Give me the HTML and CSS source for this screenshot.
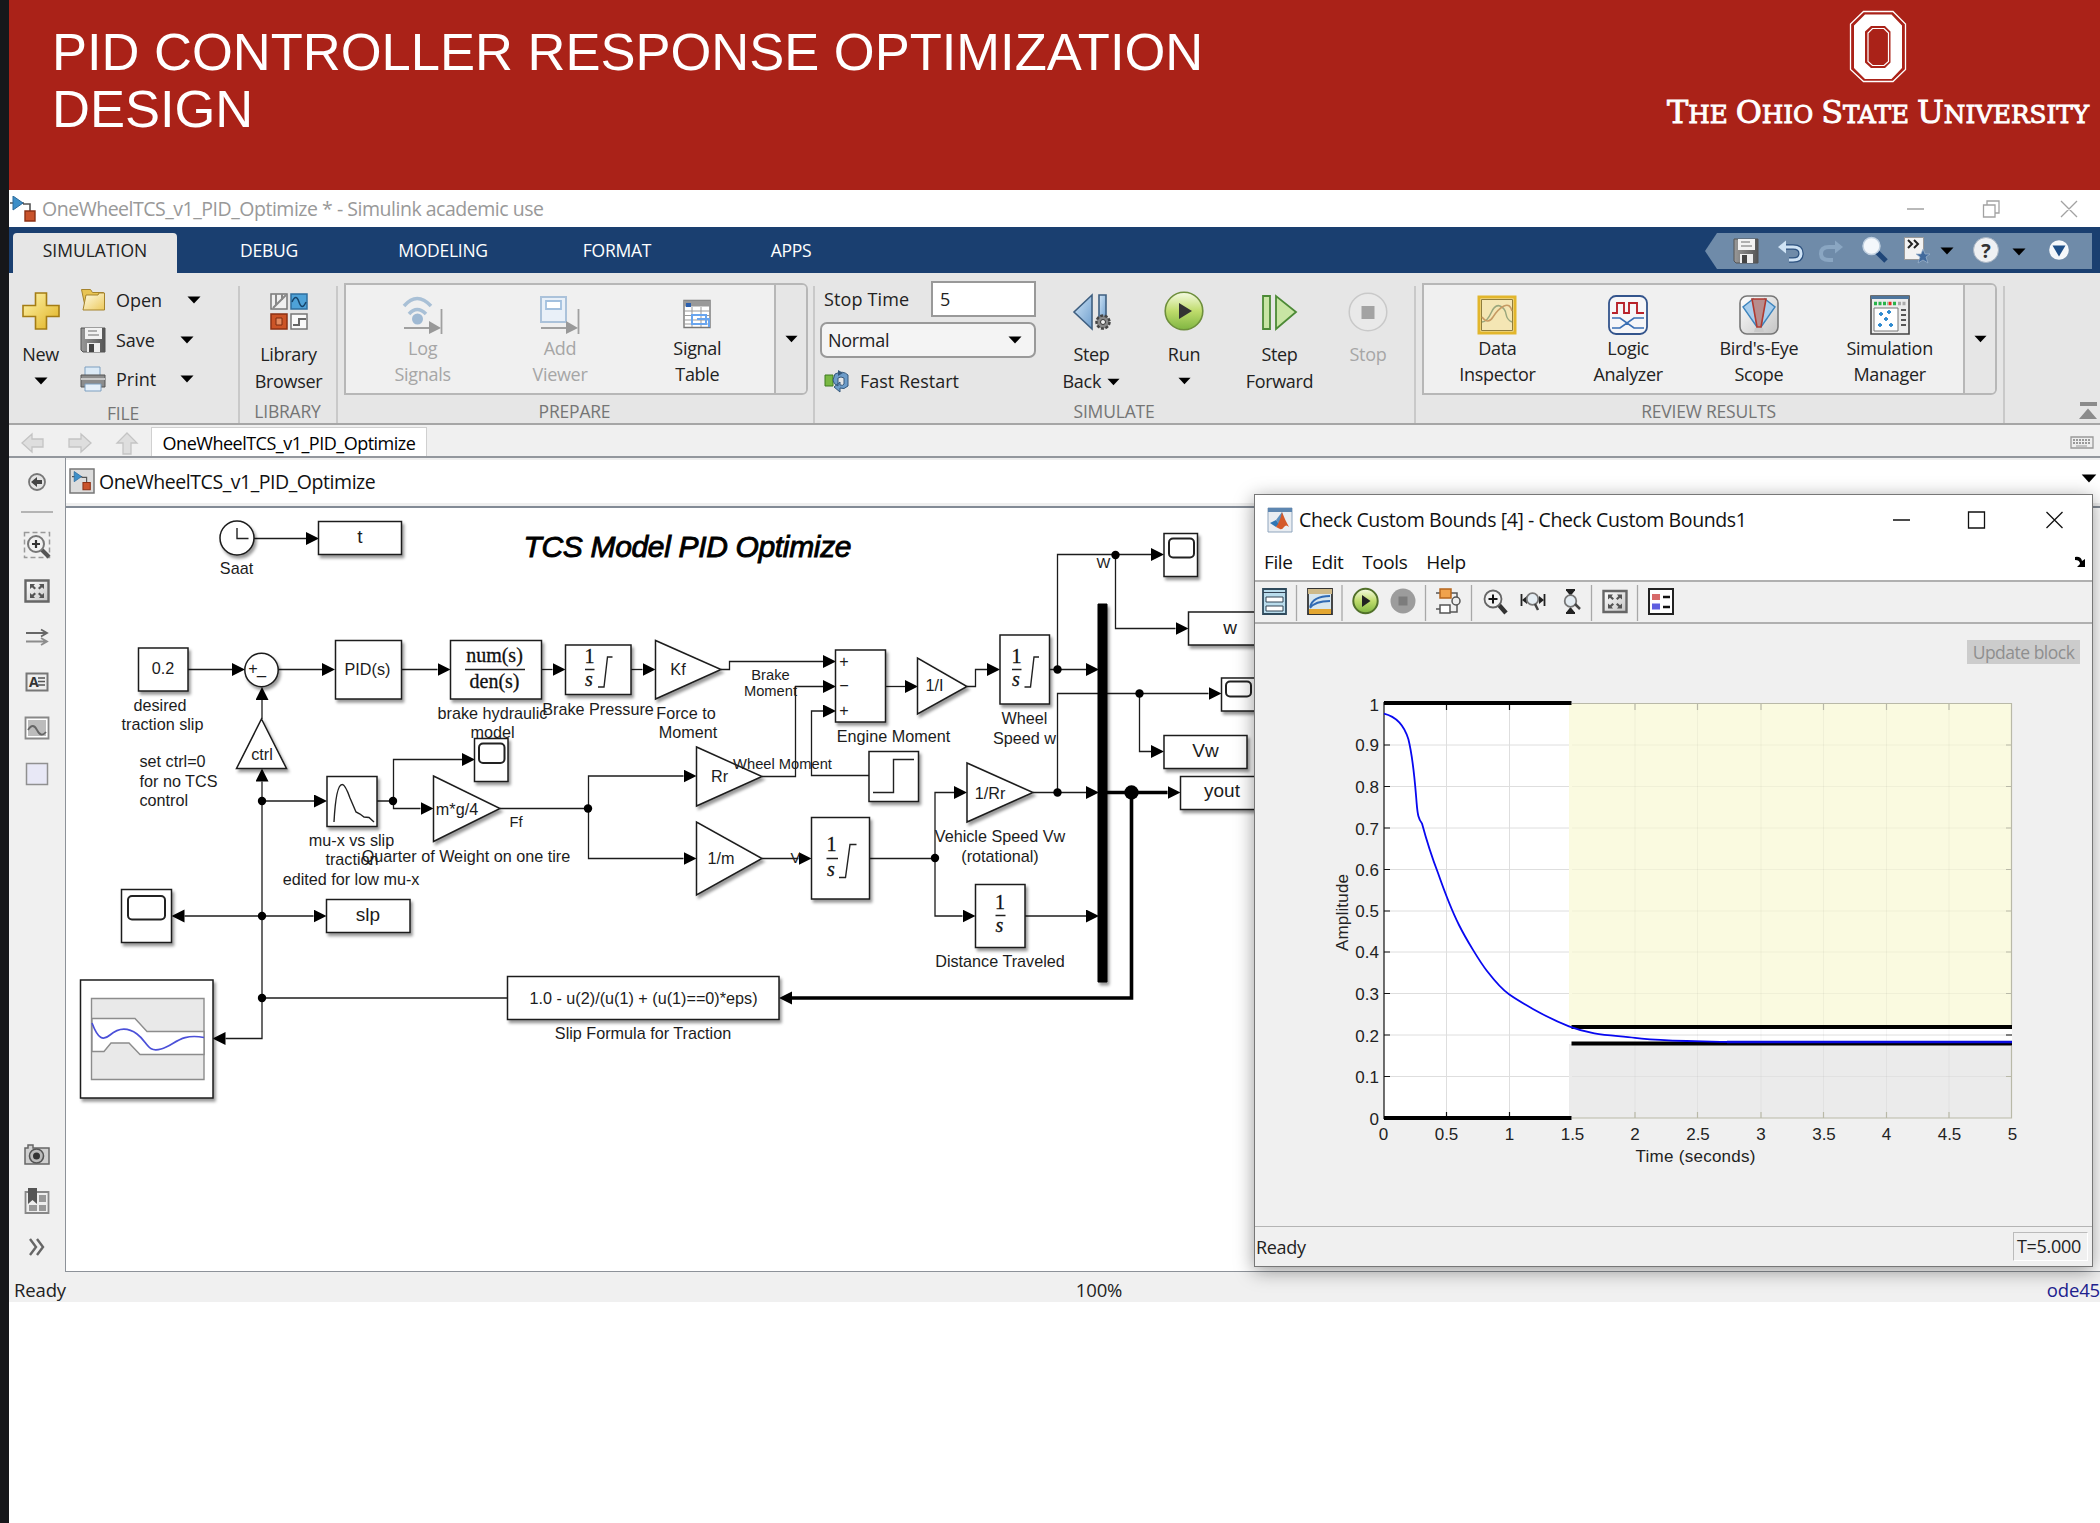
FILE: index.html
```html
<!DOCTYPE html>
<html lang="en">
<head>
<meta charset="utf-8">
<title>PID Controller Response Optimization Design</title>
<link rel="stylesheet" href="styles.css">
</head>
<body>
<svg class="defs" width="0" height="0">
  <defs>
    <linearGradient id="gold" x1="0" y1="0" x2="1" y2="1"><stop offset="0" stop-color="#fff6b0"/><stop offset="1" stop-color="#e0b01c"/></linearGradient>
    <linearGradient id="folder" x1="0" y1="0" x2="1" y2="1"><stop offset="0" stop-color="#fffce6"/><stop offset="1" stop-color="#ecc95c"/></linearGradient>
    <linearGradient id="green" x1="0" y1="0" x2="0" y2="1"><stop offset="0" stop-color="#f6fbe4"/><stop offset=".5" stop-color="#bfdc6c"/><stop offset="1" stop-color="#7fb541"/></linearGradient>
    <linearGradient id="blue" x1="0" y1="0" x2="1" y2="1"><stop offset="0" stop-color="#cfe4f6"/><stop offset="1" stop-color="#6f9fce"/></linearGradient>
    <linearGradient id="grey" x1="0" y1="0" x2="1" y2="1"><stop offset="0" stop-color="#ffffff"/><stop offset="1" stop-color="#c4c4c4"/></linearGradient>
    <linearGradient id="steel" x1="0" y1="0" x2="1" y2="0"><stop offset="0" stop-color="#999"/><stop offset="1" stop-color="#555"/></linearGradient>
    <filter id="drop" x="-20%" y="-20%" width="150%" height="150%"><feDropShadow dx="2" dy="3" stdDeviation="1.6" flood-color="#000" flood-opacity=".4"/></filter>
    <marker id="head" markerUnits="userSpaceOnUse" markerWidth="13" markerHeight="14" refX="0" refY="6.5" orient="auto"><path d="M0 0 13 6.5 0 13z"/></marker>
    <symbol id="floppy" viewBox="0 0 26 26"><path d="M1 1h24v24H3l-2-2z" fill="url(#steel)" stroke="#555"/><path d="M5 1h17v11H5z" fill="#f2f2f2"/><path d="M8 4h9M8 8h11" stroke="#999" stroke-width="1.6"/><path d="M7 16h13v9H7z" fill="#eee"/><path d="M9 17h5v8H9z" fill="#444"/></symbol>
    <symbol id="model" viewBox="0 0 26 26"><path d="M0 7h14M13 8h7v8" stroke="#555" stroke-width="1.6" fill="none"/><path d="M3 0v14l10-7z" fill="#3e8fc8" stroke="#2b6a9c"/><path d="M15 15h10v10H15z" fill="#c9532b" stroke="#8c3114" stroke-width="1.4"/></symbol>
    <symbol id="caret" viewBox="0 0 14 8"><path d="M.5.5h13L7 7.5z"/></symbol>
    <symbol id="fit" viewBox="0 0 26 24"><path d="M1.5 1.5h23v21h-23z" fill="url(#grey)" stroke="#666" stroke-width="2.4"/><path d="M6 5h5L9.6 6.8 12 9 10.5 10.5 8 8.2 6 10zM20 5h-5l1.4 1.8L14 9l1.5 1.5L18 8.200l2 1.8zM6 19h5l-1.4-1.8L12 15l-1.5-1.5L8 15.8 6 14zM20 19h-5l1.4-1.8L14 15l1.5-1.5 2.5 2.3 2-1.8z" fill="#555"/></symbol>
  </defs>
</svg>

<main class="slide">
  <header class="banner">
    <h1 class="banner-title">PID CONTROLLER RESPONSE OPTIMIZATION<br>DESIGN</h1>
    <svg class="brand" width="440" height="130" viewBox="1660 0 440 130">
      <path d="M1863.500 11.500h29.500l12.500 12.500v45.500L1893 81.500h-29.500L1850.500 69.500V24z" fill="none" stroke="#fff" stroke-width="1.300"/>
      <path fill-rule="evenodd" d="M1865 14.500h26.500l10.500 11V68l-10.500 11H1865l-11-11V25.500zM1871 26l-6 5.500v31l6 5.500h14l5.500-5.500v-31L1885 26z" fill="#fff"/>
      <path d="M1872.500 28.500h11.500l4.500 4.500v28.500l-4.500 4h-11.500l-4.500-4V33z" fill="none" stroke="#fff" stroke-width="1.200"/>
      <text class="brand-name" x="1667" y="123" textLength="422" lengthAdjust="spacingAndGlyphs"><tspan class="cap">T</tspan>HE <tspan class="cap">O</tspan>HIO <tspan class="cap">S</tspan>TATE <tspan class="cap">U</tspan>NIVERSITY</text>
    </svg>
  </header>

  <section class="simulink">
    <div class="titlebar">
      <svg width="26" height="26"><use href="#model"/></svg>
      <span class="titlebar-text">OneWheelTCS_v1_PID_Optimize * - Simulink academic use</span>
      <svg class="winctl" width="172" height="20" viewBox="0 0 172 20" fill="none" stroke="#a2a2a2" stroke-width="1.300"><path d="M1 10h17M77.500 6h11.500v12H77.500zM81 6V2h12v12h-4M155 2l16 16M171 2l-16 16"/></svg>
    </div>

    <nav class="tabs">
      <span class="tab active">SIMULATION</span><span class="tab">DEBUG</span><span class="tab">MODELING</span><span class="tab">FORMAT</span><span class="tab">APPS</span>
      <svg class="quick" width="387" height="36" viewBox="1705 233 387 36">
        <path d="M1717 233h375v36h-375l-12-18z" fill="#6f8ba9"/>
        <use href="#floppy" x="1733" y="238" width="26" height="26"/>
        <path d="M1782 247h11q8 0 8 6.500t-8 6.500h-4" fill="none" stroke="#2e5380" stroke-width="5.500"/><path d="M1782 247h11q8 0 8 6.500t-8 6.500h-4" fill="none" stroke="#cfe3f5" stroke-width="3"/><path d="m1778 247 8-6.500v13z" fill="#cfe3f5"/>
        <path d="M1838 247h-9q-8 0-8 6.500t8 6.500h4" fill="none" stroke="#8aa6c2" stroke-width="4"/><path d="m1843 247-8-6.500v13z" fill="#8aa6c2"/>
        <path d="m1877 252 9 9" stroke="#1f4678" stroke-width="5"/><ellipse cx="1871.500" cy="246" rx="8.500" ry="8.500" fill="#f3f7fb" stroke="#c0d0e0" stroke-width="1.500"/>
        <path d="M1904.500 237.500h19v22h-19z" fill="#f2f2f2" stroke="#999"/><path d="m1908 240 4 4-4 4m6-8 4 4-4 4" stroke="#222" stroke-width="2" fill="none"/><path d="m1923 249 2 5h5l-4 3 2 6-5-3-5 3 2-6-4-3h5z" fill="#426a9c" stroke="#9fb6cf" stroke-width=".7"/>
        <use href="#caret" x="1940" y="247" width="14" height="8"/>
        <circle cx="1986" cy="250" r="12.500" fill="#eef0f3" stroke="#a9b5c3"/><text x="1986" y="257.500" class="qmark">?</text>
        <use href="#caret" x="2012" y="248" width="14" height="8"/>
        <circle cx="2059" cy="250" r="9.800" fill="#f5f8fb"/><path d="M2052.500 245.500h13l-6.500 11z" fill="#1f4f88"/>
      </svg>
    </nav>

    <div class="ribbon">
      <div class="group g-file">
        <div class="group-body">
          <div class="big new">
            <svg width="38" height="40" viewBox="0 0 38 40"><path d="M13.500 2h11v12.500H37v11H24.500V38h-11V25.500H1v-11h12.500z" fill="url(#gold)" stroke="#a47c14" stroke-width="1.600"/></svg>
            <span>New</span><svg class="car" width="14" height="8"><use href="#caret"/></svg>
          </div>
          <ul class="filelist">
            <li><svg width="26" height="26" viewBox="0 0 26 26"><path d="M1.500 2.500h9l2 3h11v16h-18z" fill="#e8c453" stroke="#a5832c"/><path d="M6 8h12l1-2h5.500v17H3z" fill="url(#folder)" stroke="#a5832c"/></svg><span class="t-open">Open</span><svg width="14" height="8"><use href="#caret"/></svg></li>
            <li><svg width="26" height="26"><use href="#floppy"/></svg><span class="t-save">Save</span><svg width="14" height="8"><use href="#caret"/></svg></li>
            <li><svg width="26" height="26" viewBox="0 0 26 26"><path d="M5 1h15v10H5z" fill="#dceaf6" stroke="#7d9fc0"/><path d="M1 9h24v12H1z" fill="#8c8c8c" stroke="#555"/><path d="M1 13h24" stroke="#c9c9c9" stroke-width="2"/><path d="M5 18h16v7H5z" fill="#e6f0fa" stroke="#7d9fc0"/></svg><span class="t-print">Print</span><svg width="14" height="8"><use href="#caret"/></svg></li>
          </ul>
        </div>
        <div class="group-name">FILE</div>
      </div>
      <div class="group g-lib">
        <div class="group-body">
          <div class="big">
            <svg width="38" height="40" viewBox="0 0 38 40"><path d="M1 3h16v15H1z" fill="#f0f0f0" stroke="#777" stroke-width="1.500"/><path d="M6 3v11M12 3v6M3 17 16 4" stroke="#888" stroke-width="2"/><path d="M21 3h16v15H21z" fill="#4ea2d8" stroke="#2f6f9f" stroke-width="1.500"/><path d="M22 11q4-9 7 0t7 0" fill="none" stroke="#17456b" stroke-width="1.500"/><path d="M1 23h16v15H1z" fill="#cc5427" stroke="#8c3114" stroke-width="1.500"/><path d="M6 27h6v7H6z" fill="#e58a5f" stroke="#7a2a10"/><path d="M21 23h16v15H21z" fill="#fafafa" stroke="#777" stroke-width="1.500"/><path d="M23 34h6v-6h7" fill="none" stroke="#666" stroke-width="2"/></svg>
            <span>Library<br>Browser</span>
          </div>
        </div>
        <div class="group-name">LIBRARY</div>
      </div>
      <div class="group g-prep">
        <div class="group-body">
          <div class="gallery">
            <div class="cards prep-cards">
              <div class="card off"><svg width="40" height="40" viewBox="0 0 40 40"><path d="M1 11q13-15 27 0M6 19q8-9 17 0" fill="none" stroke="#a9c0d6" stroke-width="3.500"/><circle cx="14.500" cy="24" r="5.500" fill="#9fb9d3"/><path d="M1 33h26M38.500 14v25" stroke="#a0a0a0" stroke-width="1.800"/><path d="m26 26 12 7-12 6z" fill="#999"/></svg><span>Log<br>Signals</span></div>
              <div class="card off"><svg width="40" height="40" viewBox="0 0 40 40"><path d="M1 2h25v25H1z" fill="#e9f0f8" stroke="#abc2da" stroke-width="2"/><path d="M6 6h15v8H6z" fill="#fff" stroke="#a3c0de" stroke-width="1.800"/><path d="M1 33h26M38.500 14v25" stroke="#a0a0a0" stroke-width="1.800"/><path d="m26 26 12 7-12 6z" fill="#999"/></svg><span>Add<br>Viewer</span></div>
              <div class="card"><svg width="40" height="40" viewBox="0 0 40 40"><path d="M7 5.500h26v27H7z" fill="#fff" stroke="#777" stroke-width="1.400"/><path d="M7 5.500h26v6H7z" fill="#999"/><path d="M9 8h5v4H9z" fill="#2b5fae"/><path d="M7 16h26M7 20.500h26M7 25h26M7 29h26M15 12v20M24 12v20" stroke="#999"/><path d="M15 20h14v9H15zM20 24h12v8" fill="none" stroke="#69a5ee" stroke-width="2"/></svg><span>Signal<br>Table</span></div>
            </div>
            <div class="more"><svg width="13" height="8"><use href="#caret"/></svg></div>
          </div>
        </div>
        <div class="group-name">PREPARE</div>
      </div>
      <div class="group g-sim">
        <div class="group-body">
          <div class="simform">
            <div class="row"><span class="t-stoptime">Stop Time</span><span class="field">5</span></div>
            <div class="select"><span>Normal</span><svg width="14" height="8"><use href="#caret"/></svg></div>
            <div class="row fast"><svg width="28" height="24" viewBox="0 0 28 24"><path d="M1 6h8v11H1z" fill="#79b843" stroke="#3f7a20"/><path d="M11 5q8-4 13 1v11q-4 4-8 2v4l-6-5 6-5v3q3 1 4-1V9q-3-2-6 0v8q-5-2-5-6z" fill="#6d9cc9" stroke="#36597c"/><path d="M14 1v6l5-3z" fill="#36597c"/></svg><span class="t-fast">Fast Restart</span></div>
          </div>
          <div class="big b-back">
            <svg width="40" height="40" viewBox="0 0 40 40"><path d="M20 4v34L2 21z" fill="url(#blue)" stroke="#3f5f80" stroke-width="1.600"/><path d="M27 4h7v26h-7z" fill="url(#blue)" stroke="#3f5f80" stroke-width="1.600"/><circle cx="31" cy="31" r="6.500" fill="#888" stroke="#444" stroke-width="2.500" stroke-dasharray="3 1.500"/><circle cx="31" cy="31" r="2.500" fill="#eee" stroke="#333"/></svg>
            <span>Step<br>Back <svg width="13" height="8"><use href="#caret"/></svg></span>
          </div>
          <div class="big b-run">
            <svg width="42" height="40" viewBox="0 0 42 40"><circle cx="21" cy="20" r="18.800" fill="url(#green)" stroke="#6e8f3c" stroke-width="1.600"/><path d="M16 12v16l13-8z" fill="#333"/></svg>
            <span>Run</span><svg class="car" width="13" height="8"><use href="#caret"/></svg>
          </div>
          <div class="big b-fwd">
            <svg width="38" height="40" viewBox="0 0 38 40"><path d="M2 5h7v33H2zM15 5v33l20-17z" fill="#c8e5a4" stroke="#4c8a36" stroke-width="1.800"/></svg>
            <span>Step<br>Forward</span>
          </div>
          <div class="big b-stop off">
            <svg width="40" height="40" viewBox="0 0 40 40"><circle cx="20" cy="21" r="18.800" fill="#e9e9e9" stroke="#c9c9c9" stroke-width="1.500"/><path d="M13.500 15h13v13h-13z" fill="#a3a3a3"/></svg>
            <span>Stop</span>
          </div>
        </div>
        <div class="group-name">SIMULATE</div>
      </div>
      <div class="group g-rev">
        <div class="group-body">
          <div class="gallery">
            <div class="cards rev-cards">
              <div class="card"><svg width="40" height="40" viewBox="0 0 40 40"><path d="M2 2h36v36H2z" fill="#f4e6b4" stroke="#e2b62c" stroke-width="3"/><path d="M4.500 4.500h31v31h-31z" fill="none" stroke="#8f7d3d" stroke-width="1"/><path d="M5 27q5 0 9-9t9-7 6 8 6 8" fill="none" stroke="#9aa77d" stroke-width="1.500"/><path d="M5 22q6 8 11 0t11-11 8 5" fill="none" stroke="#c69a63" stroke-width="1.500"/></svg><span>Data<br>Inspector</span></div>
              <div class="card"><svg width="40" height="40" viewBox="0 0 40 40"><rect x="1" y="1" width="38" height="38" rx="7" fill="#f6f6f8" stroke="#33548c" stroke-width="1.800"/><path d="M4 18h5V8h7v10h5V8h8v10h7" fill="none" stroke="#b8222a" stroke-width="1.900"/><path d="M4 23h8l14 10h10M4 33h8l14-10h10" fill="none" stroke="#3a6fb4" stroke-width="1.700"/></svg><span>Logic<br>Analyzer</span></div>
              <div class="card"><svg width="40" height="40" viewBox="0 0 40 40"><rect x="1" y="1" width="38" height="38" rx="7" fill="url(#grey)" stroke="#777" stroke-width="1.600"/><path d="M14 4 4 12l14 20zM26 4l10 8-14 20z" fill="#a8cdec" stroke="#3d84bd" stroke-width="1.400"/><path d="M13 4h14l-5 28h-4z" fill="#b88d8d" stroke="#b03a30" stroke-width="1.600"/><path d="M16 33h8l1 4H15z" fill="#c9c9c9"/></svg><span>Bird's-Eye<br>Scope</span></div>
              <div class="card"><svg width="40" height="40" viewBox="0 0 40 40"><path d="M1 1h38v38H1z" fill="#ececec" stroke="#444" stroke-width="1.600"/><path d="M1 1h38v3H1z" fill="#4e759c"/><path d="M4 8.500h14M23 8.500h3" stroke="#28b34a" stroke-width="3.500" stroke-dasharray="3 1.500"/><path d="M18.500 8.500h3" stroke="#e03020" stroke-width="3.500"/><path d="M28 8.500h8" stroke="#aaa" stroke-width="3.500" stroke-dasharray="3 1.500"/><path d="M4 13h24v23H4z" fill="#fff" stroke="#777"/><path d="M9 19h4M17 17h4M14 24h4M8 30h4M19 30h4M11 17v4M19 15v4M16 22v4M10 28v4M21 28v4" stroke="#2f8bd0" stroke-width="1.800"/><path d="M31 15h5M31 20h5M31 25h5M31 30h5" stroke="#555" stroke-width="1.800"/></svg><span>Simulation<br>Manager</span></div>
            </div>
            <div class="more"><svg width="13" height="8"><use href="#caret"/></svg></div>
          </div>
        </div>
        <div class="group-name">REVIEW RESULTS</div>
      </div>
      <svg class="collapse" width="18" height="18" viewBox="0 0 18 18"><path d="M1 0h17v4H1zM9 6.500 18 17H0z" fill="#8b8b8b"/></svg>
    </div>

    <div class="docbar">
      <svg width="120" height="24" viewBox="0 0 120 24" fill="#dedede" stroke="#c4c4c4" stroke-width="1.300"><path d="M1 12 11 3v5h11v8H11v5zM70 12 60 3v5H48v8h12v5zM106 2l10 10h-6v11h-8V12h-6z"/></svg>
      <span class="doctab">OneWheelTCS_v1_PID_Optimize</span>
      <svg class="keys" width="24" height="13" viewBox="0 0 24 13"><path d="M1 1h22v11H1z" fill="#eee" stroke="#999" stroke-width="1.300"/><path d="M3 4h18M3 7h18" stroke="#999" stroke-width="2" stroke-dasharray="2 1"/><path d="M6 10h11" stroke="#999"/></svg>
    </div>

    <div class="workspace">
      <aside class="palette">
        <svg class="p-hide" width="20" height="20" viewBox="0 0 20 20"><circle cx="10" cy="10" r="8" fill="#e4e4e4" stroke="#777" stroke-width="1.800"/><path d="M4 10l6-5v3h5v4h-5v3z" fill="#444"/></svg>
        <svg class="p-zoom" width="28" height="28" viewBox="0 0 28 28"><path d="M1.500 1.500h25v25h-25z" fill="none" stroke="#999" stroke-width="1.500" stroke-dasharray="5 3"/><path d="m18 18 8 8" stroke="#555" stroke-width="4"/><circle cx="13" cy="13" r="8" fill="#f2f2f2" stroke="#777" stroke-width="2"/><path d="M9 13h8M13 9v8" stroke="#333" stroke-width="2.200"/></svg>
        <svg class="p-fit" width="26" height="24"><use href="#fit"/></svg>
        <svg class="p-arrows" width="26" height="20" viewBox="0 0 26 20" fill="none" stroke="#666" stroke-width="1.800"><path d="M2 6h20M17 2.500l6 3.500-6 3.500"/><path d="M2 14.500h20M17 11l6 3.500-6 3.500" stroke="#8c8c8c"/></svg>
        <svg class="p-note" width="24" height="20" viewBox="0 0 24 20"><path d="M1.500 1.500h21v17h-21z" fill="#eee" stroke="#777" stroke-width="2"/><path d="M13 6h7M13 9.500h7M13 13h7" stroke="#555" stroke-width="1.400"/><text x="4" y="14.500" class="note-a">A</text></svg>
        <svg class="p-img" width="26" height="24" viewBox="0 0 26 24"><path d="M1.500 1.500h23v21h-23z" fill="#fff" stroke="#888" stroke-width="1.800"/><path d="M4 4h18v16H4z" fill="#bcbcbc"/><path d="M4 14q5-8 9 0t9 2" fill="none" stroke="#666" stroke-width="1.800"/></svg>
        <svg class="p-area" width="24" height="24" viewBox="0 0 24 24"><path d="M1.500 1.500h21v21h-21z" fill="#e8e8f6" stroke="#909090" stroke-width="1.500"/></svg>
        <svg class="p-cam" width="26" height="22" viewBox="0 0 26 22"><path d="M1 4h3V1h5v3h16v16H1z" fill="#d0d0d0" stroke="#666" stroke-width="1.500"/><circle cx="12.500" cy="12" r="7" fill="#bbb" stroke="#555" stroke-width="1.600"/><circle cx="12.500" cy="12" r="3.500" fill="#333"/></svg>
        <svg class="p-book" width="26" height="28" viewBox="0 0 26 28"><path d="M1.500 5h23v21h-23z" fill="#eee" stroke="#888" stroke-width="1.800"/><path d="M15 8h7v7h-7zM5 18h8v6H5zM15 18h7v6h-7z" fill="#999"/><path d="M4 1h9v16l-4.500-4L4 17z" fill="#555"/></svg>
        <svg class="p-more" width="18" height="18" viewBox="0 0 18 18" fill="none" stroke="#666" stroke-width="2.400"><path d="m2 1 6 8-6 8M9 1l6 8-6 8"/></svg>
      </aside>
      <div class="editor">
        <div class="crumb">
          <svg width="26" height="26" viewBox="0 0 26 26"><path d="M1 1h24v24H1z" fill="#dcdcdc" stroke="#777" stroke-width="1.500"/><use href="#model" x="3" y="3" width="19" height="20"/></svg>
          <span class="crumb-text">OneWheelTCS_v1_PID_Optimize</span>
          <svg class="crumb-more" width="16" height="9"><use href="#caret"/></svg>
        </div>
        <svg class="canvas" width="2034" height="763" viewBox="66 508 2034 763">
          <g class="wire">
            <path marker-end="url(#head)" d="M254 538.500H306"/>
            <path marker-end="url(#head)" d="M188 669.500H232"/>
            <path marker-end="url(#head)" d="M278 669.500H322"/>
            <path marker-end="url(#head)" d="M401 669.500H437.500"/>
            <path marker-end="url(#head)" d="M541 669.500H552.500"/>
            <path marker-end="url(#head)" d="M631 669.500H642.500"/>
            <path marker-end="url(#head)" d="M721 669.500H729.500V661.500H823"/>
            <path marker-end="url(#head)" d="M762 776.500H795.500V686.500H823"/>
            <path marker-end="url(#head)" d="M869 775.500H811.500V711H823"/>
            <path marker-end="url(#head)" d="M886 686.500H905"/>
            <path marker-end="url(#head)" d="M967 686.500H975.500V669.500H987"/>
            <path marker-end="url(#head)" d="M1049 669.500H1086"/>
            <path marker-end="url(#head)" d="M1057.500 669.500V554.500H1151"/>
            <path marker-end="url(#head)" d="M1115.500 554.500V628.500H1175.500"/>
            <path marker-end="url(#head)" d="M1057.500 792.500V693.500H1208.500"/>
            <path marker-end="url(#head)" d="M1139.500 693.500V751.500H1151"/>
            <path marker-end="url(#head)" d="M1033 792.500H1086"/>
            <path marker-end="url(#head)" d="M869 858.500H935V792.500H954"/>
            <path marker-end="url(#head)" d="M935 858.500V916H962.500"/>
            <path marker-end="url(#head)" d="M1025 916H1086"/>
            <path marker-end="url(#head)" d="M762 858.500H798.500"/>
            <path marker-end="url(#head)" d="M500 808.500H588.500V776H683.500"/>
            <path marker-end="url(#head)" d="M588.500 808.500V858.500H683.500"/>
            <path marker-end="url(#head)" d="M377 801H393.500V759.500H462"/>
            <path marker-end="url(#head)" d="M393.500 801V808.500H420.500"/>
            <path marker-end="url(#head)" d="M262 801H314"/>
            <path marker-end="url(#head)" d="M262 916H184.500"/>
            <path marker-end="url(#head)" d="M262 916H313.500"/>
            <path d="M507 998H262"/>
            <path marker-end="url(#head)" d="M262 719V700"/>
            <path marker-end="url(#head)" d="M262 801V781.500"/>
            <path marker-end="url(#head)" d="M262 801V1038.500H225.500"/>
          </g>
          <path class="bus" marker-end="url(#head)" d="M1107 792.500H1167.500"/>
          <path class="bus" marker-end="url(#head)" d="M1131.500 792.500V998H792"/>
          <g>
            <circle cx="262" cy="801" r="4.200"/><circle cx="393" cy="801" r="4.200"/><circle cx="588" cy="808.500" r="4.200"/><circle cx="262" cy="916" r="4.200"/><circle cx="262" cy="998" r="4.200"/><circle cx="935" cy="858" r="4.200"/><circle cx="1057.500" cy="669.500" r="4.200"/><circle cx="1057.500" cy="792.500" r="4.200"/><circle cx="1115.500" cy="555" r="4.200"/><circle cx="1139.500" cy="693.500" r="4.200"/><circle cx="1131.500" cy="792.500" r="7.200"/>
          </g>
          <g class="block" filter="url(#drop)">
            <circle cx="237" cy="538" r="17"/><path d="M318.500 521.500H401.500V554.500H318.500z"/>
            <path d="M138.500 648H188V691H138.500z"/><circle cx="261.500" cy="670" r="16.700"/><path d="M335.500 640.500H401.500V699H335.500z"/>
            <path d="M261.500 719 286.500 768.500H236.500z"/><path d="M450.500 640.500H541.500V699H450.500z"/><path d="M565.500 645H631V694.500H565.500z"/>
            <path d="M655.500 640.500V699L721 669.500z"/><path d="M835.500 650H885.500V722H835.500z"/><path d="M917.500 658V714L967 686.500z"/>
            <path d="M1000 635H1049.500V704H1000z"/><path d="M1164 533.500H1197.500V576.500H1164z"/><path d="M1188.500 612H1271V645H1188.500z"/>
            <path d="M1221.500 678H1265V711H1221.500z"/><path d="M1164 735.500H1247V768.500H1164z"/><path d="M1180.500 776.500H1264V809.500H1180.500z"/>
            <path d="M967 763V822L1033 792.500z"/><path d="M975.500 884.500H1025V947.500H975.500z"/><path d="M869 751.500H918.500V801.500H869z"/>
            <path d="M811.500 817.500H869.500V899H811.500z"/><path d="M696.500 747V806L762 776.500z"/><path d="M696.500 822V895L762 858.500z"/>
            <path d="M433.500 776V841.500L500 808.500z"/><path d="M474.500 738.500H508V781.500H474.500z"/><path d="M327 776.500H377V826.500H327z"/>
            <path d="M121.500 889.500H171.500V942.500H121.500z"/><path d="M326.500 899.500H410V932.500H326.500z"/><path d="M507.500 976.500H779V1019.500H507.500z"/>
            <path d="M80.500 980H213V1098H80.500z"/>
            <path class="mux" d="M1098 604H1107V982H1098z"/>
          </g>
          <g class="glyph">
            <path d="M237 528V538.500H248.500"/><path d="M465 669.500H525M585 669.500H594.500M1012 669.500H1021.500M995.500 915.500H1005.500M826.500 858.500H838"/>
            <path d="M598 687H604L607.500 657H612.500M1024.500 687H1030.500L1034 657H1039M839 877.500H845.500L850 844.500H856.500"/>
            <path d="M873 792.500H893.500V759.500H914"/>
            <path d="M334 822Q336 785 342 784.500Q345 784 350 798L356 812 360 814 364 817 369 817.500 374 822"/>
            <rect x="479" y="743.500" width="25.500" height="19.500" rx="4" class="scr"/><rect x="1169" y="538.500" width="25" height="19" rx="4" class="scr"/><rect x="1226" y="681.500" width="25" height="15" rx="4" class="scr"/><rect x="128" y="896" width="37" height="23.500" rx="4" class="scr"/>
          </g>
          <g class="bounds">
            <path d="M91.500 998.500H204V1079.500H91.500z" fill="#e9e9e9"/>
            <path d="M92 1018.500H135L147 1031.500H204V1054.500H140L129 1043H111L104 1051.500H92z" fill="#fff"/>
            <path d="M92 1023C98 1039 103 1041 110 1035S126 1026 137 1034 147 1053 161 1049 180 1033 204 1037.500" class="wave"/>
          </g>
          <g class="lbl mid">
            <text x="236.500" y="574">Saat</text><text x="160" y="711">desired</text><text x="162.500" y="730">traction slip</text>
            <text x="163" y="674">0.2</text><text x="367.500" y="675">PID(s)</text><text x="262" y="760">ctrl</text>
            <text x="253" y="674" class="sign">+</text><text x="261.500" y="674">_</text>
            <text x="492.500" y="718.500">brake hydraulic</text><text x="492.500" y="738">model</text><text x="598" y="714.500">Brake Pressure</text>
            <text x="678" y="675">Kf</text><text x="686" y="718.500">Force to</text><text x="688" y="738">Moment</text>
            <text x="844" y="667">+</text><text x="844" y="691">−</text><text x="844" y="716">+</text>
            <text x="893.500" y="741.500">Engine Moment</text><text x="934.500" y="691">1/I</text><text x="1024.500" y="724">Wheel</text><text x="1024.500" y="744">Speed w</text>
            <text x="990" y="798.500">1/Rr</text><text x="1000" y="842">Vehicle Speed Vw</text><text x="1000" y="862">(rotational)</text><text x="1000" y="967">Distance Traveled</text>
            <text x="719.500" y="782">Rr</text><text x="721" y="864">1/m</text><text x="457" y="814.500">m*g/4</text>
            <text x="351.500" y="846">mu-x vs slip</text><text x="352" y="865">traction</text><text x="351" y="885">edited for low mu-x</text><text x="466" y="862">Quarter of Weight on one tire</text>
            <text x="643.500" y="1004">1.0 - u(2)/(u(1) + (u(1)==0)*eps)</text><text x="643" y="1039">Slip Formula for Traction</text>
          </g>
          <g class="lbl"><text x="139.500" y="767">set ctrl=0</text><text x="139.500" y="786.500">for no TCS</text><text x="139.500" y="806">control</text></g>
          <g class="lbl var mid"><text x="360" y="543">t</text><text x="1230" y="634">w</text><text x="1205.500" y="757">Vw</text><text x="1222" y="797">yout</text><text x="368" y="921">slp</text></g>
          <g class="lbl sig mid"><text x="770.500" y="679.500">Brake</text><text x="770.500" y="696">Moment</text><text x="782.500" y="769">Wheel Moment</text><text x="516" y="827">Ff</text><text x="1103.500" y="567.500">W</text><text x="795.500" y="863">V</text></g>
          <g class="eq mid"><text x="494.500" y="661.500">num(s)</text><text x="494.500" y="688">den(s)</text><text x="589.500" y="662.500">1</text><text x="1016.500" y="662.500">1</text><text x="1000" y="908.500">1</text><text x="831.500" y="850.500" class="lg">1</text>
            <g class="it"><text x="589" y="686">s</text><text x="1016" y="686">s</text><text x="999.500" y="932">s</text><text x="831" y="876" class="lg">s</text></g></g>
          <text class="model-title" x="523.500" y="557" textLength="328">TCS Model PID Optimize</text>
        </svg>
      </div>
    </div>
    <footer class="status"><span class="s-ready">Ready</span><span class="s-zoom">100%</span><span class="s-solver">ode45</span></footer>
  </section>

  <section class="dialog">
    <div class="dlg-title">
      <svg width="26" height="26" viewBox="0 0 26 26"><path d="M1 1h24v24H1z" fill="#e9edf2" stroke="#8fa5bd"/><path d="M1 1h24v4H1z" fill="#5d86b0"/><path d="m3 16 6-3 3 4-3 3z" fill="#2f76b5"/><path d="m9 13 6-8 1 6-4 6z" fill="#5a8fc0"/><path d="M15 5q3 8 7 15-3-3-5 0t-4 2l-4-2q4-5 6-15z" fill="#d4592a"/></svg>
      <span class="dlg-name">Check Custom Bounds [4] - Check Custom Bounds1</span>
      <svg class="winctl" width="172" height="20" viewBox="0 0 172 20" fill="none" stroke="#111" stroke-width="1.300"><path d="M1 10h17M76.500 2h16v16h-16zM154.500 2l16 16M170.500 2l-16 16"/></svg>
    </div>
    <div class="dlg-menu"><span>File</span><span>Edit</span><span>Tools</span><span>Help</span><svg width="13" height="12" viewBox="0 0 13 12"><path d="M1 1q6-1 7 4l3-2v8H3l3-3Q6 4 1 4z"/></svg></div>
    <div class="dlg-tools">
      <svg width="836" height="42" viewBox="1255 582 836 42">
        <path d="M1296.500 585v36M1342 585v36M1425.500 585v36M1471.500 585v36M1591.500 585v36M1637.500 585v36" stroke="#a8a8a8" stroke-width="1.300"/>
        <path d="M1263 589h23v25h-23z" fill="#b9dcec" stroke="#2f4a5c" stroke-width="1.800"/><path d="M1266 597h17v5h-17zM1266 606h17v5h-17z" fill="#fff" stroke="#345"/><path d="M1263 592.500h23" stroke="#345"/>
        <path d="M1308 589h24v25h-24z" fill="#d7e6ef" stroke="#333" stroke-width="1.800"/><path d="M1308 589h24v5h-24z" fill="#cdb98a"/><path d="M1309 609h22v5h-22z" fill="#e3a631"/><path d="M1310 607q3-11 20-11M1310 608q5-7 20-7" fill="none" stroke="#2f6ab4" stroke-width="1.800"/>
        <circle cx="1365.500" cy="601" r="12.200" fill="url(#green)" stroke="#51702a" stroke-width="2"/><path d="M1362 595v12l8.500-6z" fill="#222"/>
        <circle cx="1403" cy="601" r="12.500" fill="#9c9c9c"/><path d="M1398.500 596.500h9v9h-9z" fill="#7c7c7c"/>
        <path d="M1436 593h5M1449 593h8v19h-8M1436 609h5" fill="none" stroke="#555" stroke-width="1.500"/><path d="M1440 589h11v9h-11z" fill="#f0a24c" stroke="#b5651d" stroke-width="1.500"/><path d="M1440 605h10v8h-10z" fill="#fff" stroke="#555" stroke-width="1.500"/><circle cx="1456" cy="601" r="4" fill="#eee" stroke="#555" stroke-width="1.500"/>
        <path d="m1499 605 7 8" stroke="#333" stroke-width="4.500"/><circle cx="1493" cy="599" r="8.500" fill="#f2f2f2" stroke="#666" stroke-width="1.800"/><path d="M1488.500 599h9M1493 594.500v9" stroke="#111" stroke-width="2"/>
        <path d="M1521.500 594v12M1544.500 594v12" stroke="#222" stroke-width="1.800"/><path d="m1522 600 5-4v8zM1544 600l-5-4v8z" fill="#222"/><circle cx="1532.500" cy="599" r="5.800" fill="#e4ecf2" stroke="#777" stroke-width="1.800"/><path d="m1535 604 3 6" stroke="#444" stroke-width="2.500"/>
        <path d="M1566 590h9M1566 613h9" stroke="#222" stroke-width="2"/><path d="m1570.500 596 4-5h-8zM1570.500 607l4 5h-8z" fill="#222"/><circle cx="1570.500" cy="601" r="5.800" fill="#e4ecf2" stroke="#777" stroke-width="1.800"/><path d="m1575 604 5 5" stroke="#444" stroke-width="2.500"/>
        <use href="#fit" x="1602" y="589" width="26" height="25"/>
        <path d="M1649 589h24v25h-24z" fill="#fff" stroke="#222" stroke-width="2"/><path d="M1652 594h8v6h-8z" fill="#d76a6a"/><path d="M1652 603.500h8v6h-8z" fill="#5f5fe0"/><path d="M1663 597h7M1663 607h7" stroke="#111" stroke-width="2.500"/>
      </svg>
    </div>
    <div class="dlg-body">
      <span class="update">Update block</span>
      <svg class="plot" width="836" height="562" viewBox="1255 664 836 562">
        <path d="M1384 703.500H2012V1118H1384z" fill="#fff"/>
        <path d="M1446.500 704V1118M1509.500 704V1118M1384 745H1572M1384 786.500H1572M1384 828H1572M1384 869.500H1572M1384 911H1572M1384 952H1572M1384 993.500H1572M1384 1035H2012M1384 1076.500H1572" stroke="#dedede"/>
        <path d="M1569 703.500H2012V1027H1569z" fill="#fafae0"/><path d="M1569 1044H2012V1118H1569z" fill="#ebebeb"/>
        <path d="M1635 704V1118M1697.500 704V1118M1761 704V1118M1823.500 704V1118M1886.500 704V1118M1949 704V1118M1572 745H2012M1572 786.500H2012M1572 828H2012M1572 869.500H2012M1572 911H2012M1572 952H2012M1572 993.500H2012M1572 1076.500H2012" stroke="#000" stroke-opacity=".04"/>
        <path d="M1572 703.500H2011.500V1026M1572 1118H2011.500V1046M1635 704v6M1697.500 704v6M1761 704v6M1823.500 704v6M1886.500 704v6M1949 704v6M1635 1118v-6M1697.500 1118v-6M1761 1118v-6M1823.500 1118v-6M1886.500 1118v-6M1949 1118v-6M2012 745h-6M2012 786.500h-6M2012 828h-6M2012 869.500h-6M2012 911h-6M2012 952h-6M2012 993.500h-6M2012 1076.500h-6" fill="none" stroke="#b9b9a8" stroke-width="1.200"/>
        <path d="M1384 702V1119M1446.500 704v6M1509.500 704v6M1446.500 1118v-6M1509.500 1118v-6M1384 745h6M1384 786.500h6M1384 828h6M1384 869.500h6M1384 911h6M1384 952h6M1384 993.500h6M1384 1035h6M1384 1076.500h6M2012 1035h-6" stroke="#111" stroke-width="1.200"/>
        <path d="M1384 703H1571.500M1384 1118H1571.500M1571.500 1027H2012M1571.500 1043.500H2012" stroke="#000" stroke-width="4"/>
        <path d="M1384 713.600C1398 717 1405 728 1408.400 739.300 1413.500 760 1415 783 1416.600 802.600 1417.600 815 1418.500 819 1422 823.500 1427 842 1433 860 1438 873 1445 893 1452 911 1459 925S1480 962 1487 971 1500 988 1509 994.300 1545 1017 1569 1026.400 1615 1035 1635 1037.800 1700 1041.500 1740 1042H2012" fill="none" stroke="#0808f0" stroke-width="1.800" stroke-linejoin="round"/>
        <path d="M1727 1042H2012" stroke="#0d0de0" stroke-width="2.400"/>
        <g class="tick yt"><text x="1379" y="710.500">1</text><text x="1379" y="751">0.9</text><text x="1379" y="792.500">0.8</text><text x="1379" y="834.500">0.7</text><text x="1379" y="876">0.6</text><text x="1379" y="917">0.5</text><text x="1379" y="958">0.4</text><text x="1379" y="1000">0.3</text><text x="1379" y="1041.500">0.2</text><text x="1379" y="1083">0.1</text><text x="1379" y="1125">0</text></g>
        <g class="tick mid"><text x="1383.500" y="1140">0</text><text x="1446.500" y="1140">0.5</text><text x="1509.500" y="1140">1</text><text x="1572.500" y="1140">1.5</text><text x="1635" y="1140">2</text><text x="1698" y="1140">2.5</text><text x="1761" y="1140">3</text><text x="1824" y="1140">3.5</text><text x="1886.500" y="1140">4</text><text x="1949.500" y="1140">4.5</text><text x="2012.500" y="1140">5</text>
        <text x="1695.500" y="1162" textLength="120">Time (seconds)</text><text transform="translate(1348 912.500) rotate(-90)" textLength="77">Amplitude</text></g>
      </svg>
    </div>
    <div class="dlg-status"><span>Ready</span><span class="time">T=5.000</span></div>
  </section>
</main>
</body>
</html>
```
FILE: styles.css
```css
* { box-sizing: border-box; }
body { margin: 0; background: #fff; color: #222; font-family: "Open Sans", "Noto Sans", sans-serif; overflow: hidden; }
.defs { position: absolute; }
svg { display: block; flex: none; overflow: visible; }
.slide { position: relative; width: 2100px; height: 1523px; overflow: hidden; border-left: 9px solid #16171a; background: #fff; }

/* slide banner */
.banner { display: flex; justify-content: space-between; height: 190px; padding-left: 43px; background: #aa2218; }
.banner-title { margin: 0; padding-top: 23px; color: #fff; font: 400 52.500px/57px "Liberation Sans", Arial, sans-serif; white-space: nowrap; }
.brand-name { fill: #fff; stroke: #fff; stroke-width: .9; font: 24px "DejaVu Serif", serif; }
.brand-name .cap { font-size: 31px; }

/* application window */
.simulink { display: flex; flex-direction: column; height: 1112px; background: #f0f0f0; }
.simulink > * { flex-shrink: 0; }
.titlebar { display: flex; align-items: center; height: 37px; padding: 0 22px 0 1px; background: #fff; }
.titlebar-text { margin-left: 6px; color: #999; font-size: 19.500px; letter-spacing: -.48px; }
.winctl { margin-left: auto; }
.tabs { display: flex; align-items: flex-end; height: 46px; padding: 0 8px 0 4px; background: #1a3f70; color: #fff; }
.tab { width: 164px; height: 40px; margin-right: 10px; line-height: 35px; text-align: center; font-size: 17.500px; letter-spacing: -.25px; }
.tab.active { background: #e6e6e6; color: #222; border-radius: 4px 4px 0 0; letter-spacing: 0; }
.quick { margin: 0 0 4px auto; }
.qmark { font: 700 20px "Open Sans", sans-serif; text-anchor: middle; fill: #333; }

.ribbon { display: flex; height: 152px; background: #e6e6e6; border-bottom: 2px solid #a6a6a6; font-size: 18px; letter-spacing: -.3px; }
.group { display: flex; flex-direction: column; background: linear-gradient(#c9c9c9, #c9c9c9) right 13px / 2px 138px no-repeat; }
.group-body { display: flex; height: 128px; padding-top: 10px; }
.group-name { height: 24px; padding-right: 3px; line-height: 25px; text-align: center; color: #757575; font-size: 17.500px; letter-spacing: -.2px; }
.g-file { width: 231px; }
.g-lib { width: 98px; }
.g-prep { width: 477px; padding-left: 6px; }
.g-prep .group-name { padding-right: 10px; }
.g-sim { width: 601px; }
.g-rev { width: 589px; padding-left: 6px; }
.g-rev .group-name { padding-right: 10px; }
.big { display: flex; flex-direction: column; align-items: center; padding-top: 8px; line-height: 27px; text-align: center; }
.big > span { margin-top: 10px; }
.big span svg { display: inline-block; vertical-align: 2px; margin-left: 2px; }
.big .car { margin-top: 9px; }
.off { color: #a6a6a6; }
.new { width: 63px; }
.g-lib .big { width: 97px; }
.filelist { margin: 0; padding: 0 0 0 8px; list-style: none; }
.filelist li { display: flex; align-items: center; height: 39.500px; padding-bottom: 5px; }
.filelist span { width: 64px; margin-left: 10px; }
.filelist .t-open { width: 71px; letter-spacing: 0; }
.filelist .t-save, .filelist .t-print { letter-spacing: 0; }
.gallery { display: flex; height: 112px; border: 2px solid #b7b7b7; border-radius: 0 6px 6px 0; background: #f0f0f0; }
.g-prep .gallery { width: 464px; }
.g-rev .gallery { width: 575px; }
.cards { display: flex; flex: 1; }
.prep-cards { padding: 0 8px 0 8px; }
.rev-cards { padding: 0 8px; }
.card { display: flex; flex: 1; flex-direction: column; align-items: center; padding-top: 10px; line-height: 26px; text-align: center; }
.more { display: flex; align-items: center; justify-content: center; width: 32px; border-left: 2px solid #b7b7b7; background: #e6e6e6; border-radius: 0 4px 4px 0; }
.simform { width: 221px; margin-top: -2px; padding-left: 5px; }
.row { display: flex; align-items: center; justify-content: space-between; height: 36px; padding-left: 4px; }
.t-stoptime { letter-spacing: .15px; }
.field { width: 105px; height: 36px; padding-left: 7px; border: 2px solid #999; background: #fff; line-height: 32px; }
.select { display: flex; align-items: center; justify-content: space-between; height: 36px; margin-top: 5px; padding: 0 12px 0 6px; border: 2px solid #999; border-radius: 7px; background: #f4f4f4; }
.fast { justify-content: flex-start; margin-top: 5px; }
.fast span { margin-left: 8px; letter-spacing: 0; }
.b-back { width: 111px; }
.b-run { width: 74px; }
.b-fwd { width: 117px; }
.b-stop { width: 60px; }
.collapse { align-self: flex-end; margin: 0 3px 3px auto; }

.docbar { display: flex; align-items: flex-end; height: 33px; padding: 0 6px 0 12px; border-bottom: 2px solid #93979d; }
.docbar > svg { margin-bottom: 1px; }
.doctab { width: 276px; height: 29px; margin-left: 10px; border: 1px solid #d0d0d0; border-bottom: 0; background: #fff; color: #000; line-height: 30px; text-align: center; font-size: 18px; letter-spacing: -.5px; }
.docbar .keys { margin: 0 0 7px auto; }
.workspace { display: flex; height: 814px; }
.palette { display: flex; flex-direction: column; align-items: center; width: 56px; }
.palette::before { content: ""; order: 1; width: 32px; height: 2px; margin-top: 19px; background: #b4b4b4; }
.p-hide { margin-top: 14px; }
.p-zoom, .p-fit, .p-arrows, .p-note, .p-img, .p-area, .p-cam, .p-book, .p-more { order: 2; }
.p-zoom { margin-top: 18px; }
.p-fit { margin-top: 20px; }
.p-arrows { margin-top: 24px; }
.p-note { margin-top: 25px; }
.p-img { margin-top: 24px; }
.p-area { margin-top: 22px; }
.p-cam { margin-top: 358px; }
.p-book { margin-top: 21px; }
.p-more { margin-top: 23px; }
.note-a { font: 700 14px "Open Sans", sans-serif; fill: #333; }
.editor { flex: 1; border-left: 1px solid #8d9299; border-bottom: 1px solid #8d9299; background: #fff; }
.crumb { display: flex; align-items: center; height: 50px; padding: 0 3px 2px; border-bottom: 2px solid #828a95; box-shadow: inset 0 2px #efefef, inset 0 -3px #efefef; color: #111; }
.crumb-text { margin-left: 4px; font-size: 19.500px; letter-spacing: -.45px; }
.crumb-more { margin: -6px 0 0 auto; }
.canvas { overflow: hidden; }
.status { display: grid; grid-template-columns: 1025px 120px 1fr; align-items: center; height: 30px; padding: 6px 0 0 5px; line-height: 24px; font-size: 18.500px; letter-spacing: -.15px; }
.s-zoom { text-align: center; }
.s-solver { text-align: right; color: #22228e; }

/* block diagram */
.wire path { fill: none; stroke: #1c1c1c; stroke-width: 1.300; }
.bus { fill: none; stroke: #000; stroke-width: 3.600; }
.block > * { fill: #fff; stroke: #1c1c1c; stroke-width: 1.500; }
.block .mux { fill: #000; stroke: #000; stroke-width: 1; }
.glyph { fill: none; stroke: #222; stroke-width: 1.400; }
.glyph .scr { stroke-width: 2; }
.bounds path { stroke: #8c8c8c; stroke-width: 1.400; }
.bounds .wave { fill: none; stroke: #4b50d8; stroke-width: 1.700; }
.lbl { font: 16.200px "Liberation Sans", Arial, sans-serif; fill: #1c1c1c; }
.mid { text-anchor: middle; }
.var { font-size: 19px; }
.sig { font-size: 14.700px; }
.eq { font: 20px "Liberation Serif", serif; fill: #111; stroke: #111; stroke-width: .3; }
.eq .it { font-style: italic; }
.model-title { font: italic 30px "Liberation Sans", Arial, sans-serif; stroke: #000; stroke-width: .9; }

/* bounds dialog */
.dialog { position: absolute; left: 1245px; top: 494px; display: flex; flex-direction: column; width: 839px; height: 773px; border: 1px solid #777; background: #f0f0f0; box-shadow: 0 4px 18px rgba(0, 0, 0, .4); }
.dlg-title { display: flex; align-items: center; height: 49px; padding: 0 28px 0 12px; background: #fff; }
.dlg-name { margin-left: 6px; color: #111; font-size: 19.500px; letter-spacing: -.4px; }
.dlg-menu { display: flex; align-items: center; height: 36px; padding: 0 5px 0 9px; background: #fff; color: #111; font-size: 19px; letter-spacing: -.4px; }
.dlg-menu span { margin-right: 18.800px; }
.dlg-menu svg { margin-left: auto; }
.dlg-tools { height: 44px; border-top: 2px solid #b0b0b0; border-bottom: 2px solid #b0b0b0; }
.dlg-body { height: 602px; padding-top: 16px; }
.update { display: block; width: 113px; height: 24px; margin: 0 12px 0 auto; background: #ccc; color: #8f8f8f; line-height: 24px; text-align: center; font-size: 17.500px; letter-spacing: -.5px; }
.tick { font: 17px "Liberation Sans", Arial, sans-serif; fill: #222; }
.yt { text-anchor: end; }
.dlg-status { display: flex; flex: 1; align-items: center; justify-content: space-between; border-top: 1px solid #b4b4b4; padding: 0 4px 0 1px; font-size: 18px; letter-spacing: -.3px; }
.time { width: 75px; height: 29px; border: 1px solid #bbb; border-right-color: #fff; border-bottom-color: #fff; line-height: 27px; padding-left: 3px; }
```
